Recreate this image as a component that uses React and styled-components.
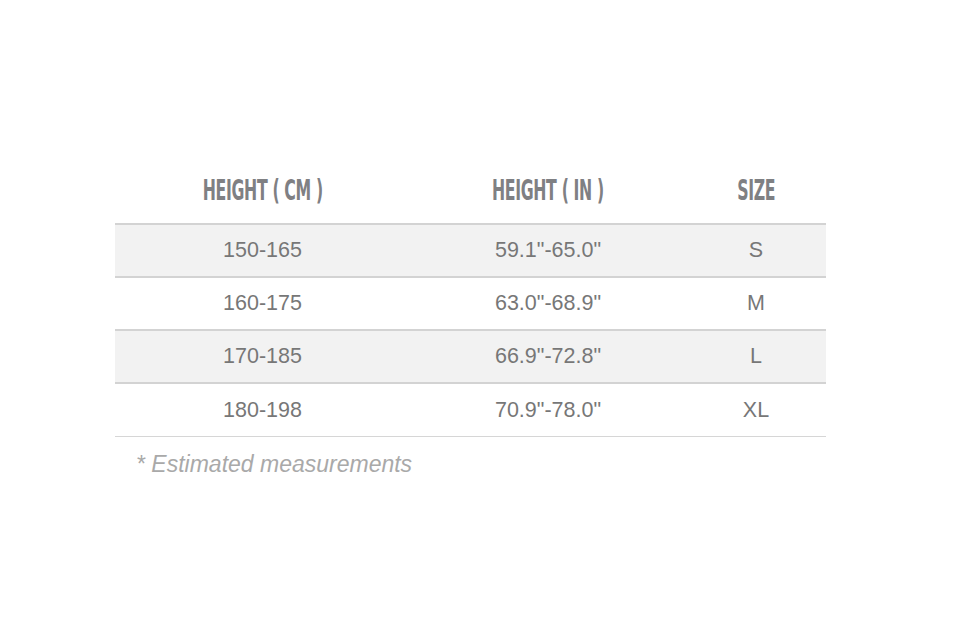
import React from "react";
import styled, { createGlobalStyle } from "styled-components";

const Global = createGlobalStyle`
  html, body { margin: 0; padding: 0; background: #fff; }
  body { font-family: "Liberation Sans", Arial, sans-serif; }
`;

const Page = styled.div`
  width: 970px;
  height: 640px;
  padding: 171px 0 0 115px;
  box-sizing: border-box;
`;

const Table = styled.div`
  width: 711px;
  display: grid;
  grid-template-columns: 295px 276px 140px;
`;

const HeadCell = styled.div`
  height: 54px;
  box-sizing: border-box;
  border-bottom: 2px solid #d3d3d3;
  display: flex;
  align-items: center;
  justify-content: center;
  padding-bottom: 14px;
  font-family: "DejaVu Sans Condensed", "DejaVu Sans", sans-serif;
  font-weight: 700;
  font-size: 25px;
  color: #7f8083;
  letter-spacing: -0.5px;
  white-space: nowrap;
  span { display: inline-block; transform: scale(0.7, 1.1); }
`;

const Cell = styled.div`
  height: 53px;
  box-sizing: border-box;
  border-bottom: ${(p) => (p.$last ? "1px solid #d6d6d6" : "2px solid #d3d3d3")};
  background: ${(p) => (p.$shaded ? "#f2f2f2" : "#fff")};
  display: flex;
  align-items: center;
  justify-content: center;
  padding-bottom: 0;
  font-size: 21.5px;
  color: #777777;
`;

const Note = styled.div`
  margin: 14px 0 0 21px;
  font-style: italic;
  font-size: 23px;
  color: #a9a9a9;
`;

const rows = [
  ["150-165", "59.1\"-65.0\"", "S"],
  ["160-175", "63.0\"-68.9\"", "M"],
  ["170-185", "66.9\"-72.8\"", "L"],
  ["180-198", "70.9\"-78.0\"", "XL"],
];

export default function App() {
  return (
    <>
      <Global />
      <Page>
        <Table>
          <HeadCell><span>HEIGHT ( CM )</span></HeadCell>
          <HeadCell><span>HEIGHT ( IN )</span></HeadCell>
          <HeadCell><span>SIZE</span></HeadCell>
          {rows.map((r, i) =>
            r.map((v, j) => (
              <Cell key={`${i}-${j}`} $shaded={i % 2 === 0} $last={i === rows.length - 1}>
                {v}
              </Cell>
            ))
          )}
        </Table>
        <Note>* Estimated measurements</Note>
      </Page>
    </>
  );
}
